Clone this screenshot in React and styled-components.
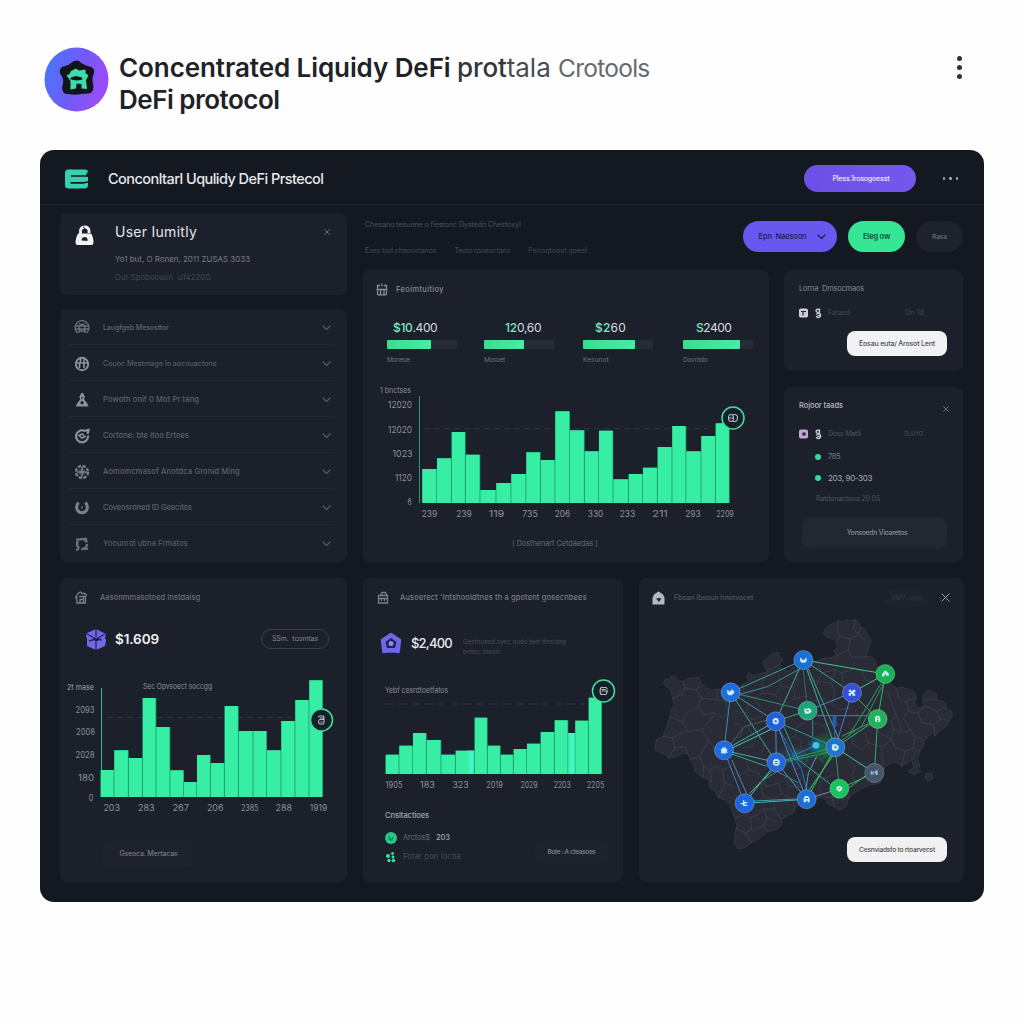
import React from "react";
import styled, { createGlobalStyle } from "styled-components";

const GREEN = "#36efa4";
const CARD = "#1b202b";

const Global = createGlobalStyle`
  * { box-sizing: border-box; }
  body { margin: 0; background: #fefefe; font-family: Inter, "Liberation Sans", sans-serif; }
`;

const Page = styled.div`
  width: 1024px;
  height: 1024px;
  padding: 47px 40px 0;
  overflow: hidden;
`;

const T = styled.span`
  display: block;
  white-space: pre;
  font-size: ${(p) => p.$size || 7.5}px;
  line-height: ${(p) => p.$lh || 10}px;
  font-weight: ${(p) => p.$weight || 400};
  color: ${(p) => p.$color || "#6b717b"};
  letter-spacing: ${(p) => p.$ls || 0}px;
`;

/* ---------- page header ---------- */

const PageHeader = styled.header`
  display: flex;
  height: 103px;
  padding-left: 4px;
`;
const Heading = styled.h1`
  margin: 5px 0 0 10px;
  font-size: 26px;
  line-height: 32px;
  font-weight: 600;
  color: #1f2226;
  flex: 1;
`;
const HeadingLine = styled.div`
  display: flex;
`;
const Kebab = styled.div`
  display: flex;
  flex-direction: column;
  gap: 4px;
  padding: 9px 22px 0 0;
`;
const KebabDot = styled.i`
  width: 5px;
  height: 5px;
  border-radius: 50%;
  background: #303236;
`;

/* ---------- window ---------- */

const Window = styled.main`
  width: 944px;
  height: 752px;
  border-radius: 14px;
  background: #141821;
`;
const TopBar = styled.div`
  display: flex;
  align-items: center;
  height: 55px;
  padding: 3px 26px 0 24px;
  border-bottom: 1px solid #20252f;
`;
const TopTitle = styled.div`
  flex: 1;
  padding-left: 19px;
`;
const Pill = styled.button`
  display: flex;
  align-items: center;
  justify-content: center;
  gap: ${(p) => p.$gap || 0}px;
  width: ${(p) => p.$w}px;
  height: ${(p) => p.$h}px;
  padding: 0 0 0 ${(p) => p.$shift || 0}px;
  border: ${(p) => p.$border || "0"};
  border-radius: ${(p) => p.$r || 16}px;
  background: ${(p) => p.$bg || "transparent"};
  font-family: inherit;
`;
const Dots = styled.div`
  display: flex;
  gap: 4px;
  margin-left: 26.5px;
  i { width: 2.5px; height: 2.5px; border-radius: 50%; background: #a3a7af; }
`;

const Body = styled.div`
  padding: 8px 20px 0;
`;
const Upper = styled.div`
  display: flex;
  gap: 16px;
  height: 349px;
`;
const Lower = styled.div`
  display: grid;
  grid-template-columns: 287px 260px 325px;
  column-gap: 16px;
  height: 304px;
  margin-top: 16px;
`;
const LeftColumn = styled.div`
  width: 287px;
  display: flex;
  flex-direction: column;
  gap: 14px;
`;
const RightArea = styled.div`
  width: 600px;
`;
const Card = styled.section`
  position: relative;
  border-radius: 7px;
  background: ${CARD};
`;

/* ---------- user card ---------- */

const UserCard = styled(Card)`
  display: flex;
  height: 82px;
  padding: 12px 17px 0 15px;
`;
const UserText = styled.div`
  flex: 1;
  padding-left: 21px;
`;
const UserMeta = styled.div`
  display: grid;
  row-gap: 9px;
  padding-top: 15px;
`;

/* ---------- navigation ---------- */

const NavCard = styled(Card)`
  height: 253px;
  padding: 0 12px 0 8px;
`;
const NavRow = styled.div`
  display: flex;
  align-items: center;
  height: 36px;
  padding: 2px 4px 0 6px;
  border-bottom: 1px solid ${(p) => (p.$last ? "transparent" : "#222833")};
`;
const NavLabel = styled.div`
  flex: 1;
  padding-left: 13px;
`;

/* ---------- toolbar ---------- */

const Toolbar = styled.div`
  display: flex;
  justify-content: space-between;
  height: 57px;
  padding-left: 2px;
`;
const Crumbs = styled.div`
  padding-top: 7px;
`;
const CrumbRow = styled.div`
  display: flex;
  gap: 18px;
  margin-top: 16px;
`;
const Actions = styled.div`
  display: flex;
  align-items: flex-start;
  padding-top: 8px;
  gap: 11px;
`;

const Panels = styled.div`
  display: flex;
  gap: 15px;
`;
const StatsCard = styled(Card)`
  width: 406px;
  height: 292px;
  padding-top: 13px;
`;
const CardHeader = styled.div`
  display: flex;
  align-items: center;
  gap: ${(p) => p.$gap || 8}px;
  height: 13px;
  padding-left: ${(p) => p.$left || 13}px;
`;
const Stats = styled.div`
  display: grid;
  grid-template-columns: 97px 99px 100px 71px;
  padding: 25px 0 15px 24px;
`;
const StatValue = styled.div`
  display: flex;
  padding-left: ${(p) => p.$left}px;
`;
const Track = styled.div`
  width: 70px;
  height: 9px;
  margin: 5px 0 6px;
  border-radius: 1px;
  background: #272b35;
`;
const Fill = styled.div`
  width: ${(p) => p.$w}px;
  height: 9px;
  border-radius: 1px;
  background: linear-gradient(90deg, #3bdc8f, #46eda6);
`;
const ChartSvg = styled.svg`
  display: block;
  font-family: Inter, "Liberation Sans", sans-serif;
`;

/* ---------- right column ---------- */

const SideColumn = styled.div`
  display: flex;
  flex-direction: column;
  gap: 16px;
  width: 179px;
`;
const SideCard = styled(Card)`
  height: ${(p) => p.$h}px;
  padding: 13px 16px 0 15px;
`;
const Line = styled.div`
  display: flex;
  align-items: center;
  height: ${(p) => p.$h || 10}px;
  margin-top: ${(p) => p.$mt || 0}px;
  padding-left: ${(p) => p.$left || 0}px;
  gap: ${(p) => p.$gap || 0}px;
`;
const Push = styled.div`
  margin-left: auto;
  margin-right: ${(p) => p.$r || 0}px;
`;
const Bullet = styled.i`
  width: 6px;
  height: 6px;
  border-radius: 50%;
  background: #2fdc9a;
`;

/* ---------- lower cards ---------- */

const Money = styled.div`
  display: flex;
  align-items: center;
  height: 24px;
  margin-top: ${(p) => p.$mt}px;
  padding: 0 18px 0 ${(p) => p.$left}px;
`;
const Note = styled.div`
  display: grid;
  row-gap: 0;
  padding: 7px 0 0 11px;
`;
const Legend = styled.div`
  display: flex;
  justify-content: space-between;
  padding: 0 14px 0 22px;
`;
const LowerCard = styled(Card)`
  padding-top: 13px;
`;
const MapCard = styled(LowerCard)`
  overflow: hidden;
`;
const MapAction = styled.div`
  position: absolute;
  right: 17px;
  bottom: 20px;
`;

/* ---------- icons ---------- */

const BrandMark = () => (
  <svg width="65" height="65" viewBox="0 0 65 65">
    <defs>
      <linearGradient id="brand" x1="0" y1="0.35" x2="1" y2="0.65">
        <stop offset="0" stopColor="#4a74fb" />
        <stop offset="0.5" stopColor="#7259f8" />
        <stop offset="1" stopColor="#a14af6" />
      </linearGradient>
    </defs>
    <circle cx="32.5" cy="32.5" r="32" fill="url(#brand)" />
    <path d="M33 13.500c3 0 4 3 7 4 4 2 9 2 10 5.500 1 3-1.500 5-1.500 9s2 8 0 12c-2 4-8 2-11.500 3-4 1-8 1-12 0-3 0-5.500 0-6.500-4s1.500-7 .5-11-4-5-3-9 5-3.500 8-5 5-4.500 9-4.500z" fill="#10151c" />
    <path d="M27 24l5-2.500 3 2 6.500-1v3.500l3 2.500-2.500 4.500 1 9-5.500-.5v-4.500l-5-.5-.5 5-5.500 1V34l-4-5.500 3-1.500z" fill="#3fdcab" />
    <path d="M25.500 32q2-2.500 6.500-3l6 1.500.500 2-5 1q-4-.5-8-1.500z" fill="#10151c" />
  </svg>
);

const AppMark = () => (
  <svg width="25" height="22" viewBox="0 0 25 22">
    <path d="M3 1.500h3q1-.5 2 0h13q3 0 3 3V17q0 3.500-3.500 3.500H4.500q-3.500 0-3.500-3.500V5q0-3 2-3.500z" fill="#33d3b0" />
    <path d="M7 7.200H25v1.600H7zM6.500 14h13l5.500-1v1.500l-6 1.200H6.500z" fill="#141821" />
    <path d="M22.800 4.500h2.200v4h-3z" fill="#141821" />
  </svg>
);

const LockIcon = () => (
  <svg width="19" height="21" viewBox="0 0 19 21">
    <path d="M5.500 9V5q1-3 4.500-3 3 0 4 3v3" fill="none" stroke="#f2f3f5" strokeWidth="2.800" />
    <path d="M3 8.500h13q2 2.500 2.500 8 0 3.500-2 3.500H2.500q-2 0-2-3.500Q1 12 3 8.500z" fill="#f2f3f5" />
    <path d="M6.500 15.500q0-3.500 3.500-3.500 2 0 2.500 2v2z" fill="#20242d" />
    <path d="M8.500 1.500l1.500 3" stroke="#20242d" strokeWidth="1" />
  </svg>
);

const Cross = ({ size = 6, color = "#737983" }) => (
  <svg width={size} height={size} viewBox="0 0 10 10" stroke={color} strokeWidth={size > 7 ? 1.1 : 1.5} strokeLinecap="round">
    <path d="M1 1l8 8M9 1L1 9" />
  </svg>
);

const Chevron = ({ color = "#525964", width = 9 }) => (
  <svg width={width} height="6" viewBox="0 0 9 6" fill="none" stroke={color} strokeWidth="1.200" strokeLinecap="round" strokeLinejoin="round">
    <path d="M1 1l3.500 3.500L8 1" />
  </svg>
);

const navGlyphs = [
  <g key="a" fill="none" stroke="#6c737d" strokeWidth="1.300">
    <path d="M3.500 13A7 7 0 1 1 12.500 13" /><path d="M1.500 6h13M1.500 9h13M4.500 3.500Q8 5.500 11.500 3.500M5 6v7M11 6v7M5.500 11h5" />
  </g>,
  <g key="b" fill="none" stroke="#8b939c" strokeWidth="1.900">
    <circle cx="8" cy="8" r="6.200" /><path d="M2 7h12M6.500 2.500v4M5.500 7v5M10 2.500V12" strokeWidth="1.600" />
  </g>,
  <g key="c" fill="#8b939c">
    <path fillRule="evenodd" d="M7.200 1h1.800l2 4-1 2.500 3 3.500 1.500 3.500H1.800l1.500-3.500 3-3.500-1-2.500zM8 4.500L6.800 6.500h2.600zM8 8.500l-2 2.500 2 1.500 2-1.500z" />
  </g>,
  <g key="d" fill="none" stroke="#8b939c" strokeWidth="2.200">
    <path d="M14 7.500A6 6 0 1 1 10.500 2.800L14.500 2 13.500 6" /><path d="M5 7.500l3-1.500 3 2.500-3 1.500z" strokeWidth="1.500" />
  </g>,
  <g key="e" fill="none" stroke="#79808a" strokeWidth="2.400">
    <circle cx="8" cy="8" r="6" strokeDasharray="3.200 1.500" /><path d="M8 3v10M3 8h10" strokeWidth="1.700" /><path d="M6 5.500v5M10 5.500v5" strokeWidth="1" />
  </g>,
  <g key="f" fill="none" stroke="#79808a" strokeWidth="3">
    <path d="M4.500 2.500Q1 7 4 11q4 3.500 8 0 3-4-.5-8.500" /><path d="M8 6v3" strokeWidth="1" />
  </g>,
  <g key="g" fill="none" stroke="#6c737d" strokeWidth="2.400">
    <circle cx="8" cy="8" r="5" strokeDasharray="8.400 2.070" /><path d="M2 3.500h4M11 1.500l2 2.500M14 12.500l-3 1M2 14l3-1" strokeWidth="2" />
  </g>,
];
const NavIcon = ({ index }) => (
  <svg width="16" height="16" viewBox="0 0 16 16">{navGlyphs[index]}</svg>
);

const BoxIcon = ({ color = "#79808a", variant = "house" }) => (
  <svg width="12" height="13" viewBox="0 0 12 13" fill="none" stroke={color} strokeWidth="1.300">
    {variant === "grid" && <path d="M4 2.500H1.500v3M8 2.500h2.500v3M1.500 7.500V11q0 .8.800.8h7.400q.8 0 .8-.8V7.500M.5 6.500h11M6 .5v3M4.500 6.500v5M8 6.500v5" />}
    {variant === "house" && <path d="M1.800 12V6.500H.5L3 2.500l2.500-1.500 2 1.500h2l2 1.500-1 1.500V12zM4 5.500h6.500M5 12V8.500h3.500M8.500 6v6" />}
    {variant === "bank" && <path d="M1.500 12V4.500h9V12zM1.500 7.500h9M3.500 4.500L5 1.500h3.500l1.500 3M4.500 7.500V10M7.500 7.500V10" />}
  </svg>
);

const HomeIcon = () => (
  <svg width="13" height="14" viewBox="0 0 13 14">
    <path d="M5.500 1q1-1 2 0l3.500 2.500 1.500 3v6.500q0 .5-.5.500H1q-.5 0-.5-.5V7L2 3.500z" fill="#b5b8bf" />
    <path d="M4 7.500l5.500-.5L7 11z" fill="#1b202b" />
  </svg>
);

const TokenIcon = ({ pink }) => (
  <svg width="9" height="10" viewBox="0 0 9 9">
    <rect width="9" height="9" rx="1.800" fill={pink ? "#c4a6d8" : "#cfd1d6"} />
    <path d={pink ? "M4 3.500h2v2H4z" : "M2 3H7M4 3v4"} stroke="#23232e" strokeWidth="1.200" fill={pink ? "#3c2f4f" : "none"} />
  </svg>
);

const CoinGlyph = () => (
  <svg width="8" height="11" viewBox="0 0 8 11" fill="none" stroke="#c9cdd2" strokeWidth="1.300" strokeLinecap="round">
    <path d="M5.500 2Q3.500.5 2.200 2 1.500 4 4.500 4.500M5.500 1v3M2.500 6l3-1Q7.500 6.500 6 9q-2 1.500-3.500-.5M4 7.500h2" />
  </svg>
);

const CubeIcon = () => (
  <svg width="20" height="21" viewBox="0 0 20 21">
    <path d="M10 0l10 5-1 4 1 2-1 6-9 4-9-4V10L0 7l1-3z" fill="#6f6aea" />
    <path d="M10 0v8M10 11v10M1 5l9 5 9-5M3 12l7-2 6 1" stroke="#25245e" strokeWidth="1.400" fill="none" />
    <path d="M7 9l3 1 4-1-2 3-3-.5z" fill="#1c1b48" />
  </svg>
);

const PentagonIcon = () => (
  <svg width="22" height="22" viewBox="0 0 22 22">
    <path d="M11 2L20 8l-1.500 12-4-.5h-7l-4 .5L2 8z" fill="#6e68e8" stroke="#6e68e8" strokeWidth="2.500" strokeLinejoin="round" />
    <path d="M11 6l5.500 4-1.500 6H7L5.500 10z" fill="#20205c" />
    <circle cx="11" cy="11.500" r="2.500" fill="#8f88f0" />
  </svg>
);

const CheckDot = () => (
  <svg width="12" height="12" viewBox="0 0 12 12">
    <circle cx="6" cy="6" r="6" fill="#26c98a" />
    <path d="M3.500 3.500Q3 8 6 9q3-1.500 2.500-5L6.500 7z" fill="#0f7f5c" />
  </svg>
);
const ClusterDot = () => (
  <svg width="12" height="12" viewBox="0 0 12 12" fill="#2fe3a0">
    <circle cx="7.500" cy="2.500" r="1.500" /><circle cx="3" cy="5" r="2" /><circle cx="8" cy="6" r="1.500" /><circle cx="4" cy="9.500" r="1.700" /><circle cx="8.500" cy="9.500" r="1.700" />
  </svg>
);

/* ---------- charts ---------- */

const mainEdges = [59.3, 74, 88.7, 102.7, 117.3, 133.3, 148.3, 163.3, 177.7, 192.3, 207, 221.7, 236, 250.3, 265.7, 280, 294.7, 309.3, 323.3, 338.3, 352.7, 366.7];
const mainHeights = [34, 44.7, 71, 48.3, 13, 20, 29, 50.7, 43, 91.7, 72.7, 51.7, 72.3, 23.7, 29, 35.3, 56, 77, 51.7, 67, 79.7];
const leftEdges = [40.7, 54.3, 68.7, 82.7, 96.3, 110.3, 124, 137, 150.7, 164.7, 178.7, 193.3, 207, 221.3, 235.3, 249.3, 263];
const leftHeights = [27, 46.7, 39, 99, 70, 26.7, 15, 42, 34, 91, 66, 66, 46.7, 76, 97, 116.7];
const midEdges = [22.7, 36.3, 50, 63.7, 78.3, 92.7, 111.7, 124.7, 137.7, 150.7, 164, 177.7, 191.7, 205.3, 212.3, 225.7, 239];
const midHeights = [19.3, 28.3, 41, 34, 19.3, 23.3, 56.3, 28.3, 19.3, 25, 30.3, 42, 53.7, 41, 53.3, 76.3];

const Bars = ({ edges, heights, base }) => (
  <g>
    {heights.map((h, i) => (
      <g key={i}>
        <rect x={edges[i]} y={base - h} width={edges[i + 1] - edges[i]} height={h} fill="#1d9f70" />
        <rect x={edges[i]} y={base - h} width={edges[i + 1] - edges[i] - 0.8} height={h} fill={GREEN} />
      </g>
    ))}
  </g>
);

const AxisText = ({ x, y, w, size = 8.5, color = "#8b9098", children }) => (
  <text x={x - w / 2} y={y + 3} fontSize={size} fill={color} textLength={w} lengthAdjust="spacingAndGlyphs">{children}</text>
);

const Marker = ({ x, y, children }) => (
  <g>
    <circle cx={x} cy={y} r="11" fill="#15212a" stroke="#48dc9c" strokeWidth="1.500" />
    <g transform={`translate(${x} ${y})`} fill="none" stroke="#b4bcc2" strokeWidth="1.100">{children}</g>
  </g>
);

const MainChart = () => (
  <ChartSvg width="406" height="178" viewBox="0 0 406 178">
    <AxisText x={32.5} y={9.5} w={31} size={7.5}>1 bnctses</AxisText>
    <AxisText x={37} y={25} w={24}>12020</AxisText>
    <AxisText x={37} y={50} w={24}>12020</AxisText>
    <AxisText x={39.5} y={74} w={20}>1023</AxisText>
    <AxisText x={40.5} y={98} w={17}>1120</AxisText>
    <AxisText x={46.5} y={121.5} w={4}>6</AxisText>
    <path d="M61 48.500H345" stroke="#2c333e" strokeWidth="1" strokeDasharray="6 4" />
    <path d="M56.500 16V123" stroke="#2a9b76" strokeWidth="1" />
    <Bars edges={mainEdges} heights={mainHeights} base={123} />
    {["239", "239", "119", "735", "206", "330", "233", "211", "293", "2209"].map((t, i) => (
      <AxisText key={i} x={[66.5, 101, 133.5, 167, 199.5, 232.5, 264.5, 297, 330, 362][i]} y={133.5} w={t.length > 3 ? 17.5 : 15.5}>{t}</AxisText>
    ))}
    <Marker x={370} y={38}><ellipse cx="-2" rx="2.500" ry="3.500" /><path d="M0-3.500h1.500q3 0 3 3.500T1.500 3.500H0M-4 0h5" /></Marker>
    <AxisText x={192} y={162.5} w={86} size={7.5} color="#666c76">( Dosthenart Cetdaedas )</AxisText>
  </ChartSvg>
);

const LeftChart = () => (
  <ChartSvg width="287" height="145" viewBox="0 0 287 145">
    <AxisText x={20.5} y={14} w={27} size={7.5} color="#a2a7ae">2t mase</AxisText>
    <AxisText x={117.5} y={13} w={69} size={7.5}>Sec Opvsoect soccgg</AxisText>
    <AxisText x={25} y={36.5} w={19}>2093</AxisText>
    <AxisText x={25.5} y={59} w={19}>2008</AxisText>
    <AxisText x={25} y={82} w={19}>2028</AxisText>
    <AxisText x={26} y={104.5} w={16}>180</AxisText>
    <AxisText x={31} y={124.5} w={4.5}>0</AxisText>
    <path d="M47 44.500H237" stroke="#2c333e" strokeWidth="1" strokeDasharray="6 4" />
    <path d="M41.500 15V124" stroke="#2fb989" strokeWidth="1" />
    <Bars edges={leftEdges} heights={leftHeights} base={124} />
    {["203", "283", "267", "206", "2385", "288", "1919"].map((t, i) => (
      <AxisText key={i} x={[51.7, 86.3, 120.7, 155.2, 189.7, 223.7, 258.5][i]} y={135} w={t.length > 3 ? 17.5 : 16.5}>{t}</AxisText>
    ))}
    <Marker x={261.5} y={47}><path d="M-3-2.500q0-1.500 1.500-1.500h3q1 0 1 1.500T1.500-.5h-3Q-3-.5-3 1.500T-1.500 4h3q1 0 1-2V-2.500M-1.500-2H2.500M-1 2h2" /></Marker>
  </ChartSvg>
);

const MidChart = () => (
  <ChartSvg width="260" height="119" viewBox="0 0 260 119">
    <defs>
      <linearGradient id="sheen"><stop offset="0" stopColor="#36efa4" /><stop offset="0.6" stopColor="#45f7cf" /><stop offset="1" stopColor="#36efa4" /></linearGradient>
    </defs>
    <AxisText x={53.5} y={17.5} w={63} size={7.5}>Yebf cesrdtoetfatos</AxisText>
    <path d="M22 32H222" stroke="#2c333e" strokeWidth="1" strokeDasharray="9 4" />
    <Bars edges={midEdges} heights={midHeights} base={102} />
    <rect x="104" y="78.700" width="7.200" height="23.300" fill="url(#sheen)" />
    <rect x="205.300" y="61" width="6.500" height="41" fill="url(#sheen)" />
    {["1905", "183", "323", "2019", "2029", "2203", "2205"].map((t, i) => (
      <AxisText key={i} x={[31, 64.5, 97.5, 131.5, 166, 199.2, 232.5][i]} y={113} w={[17, 15, 16, 16.5, 17, 17, 17.5][i]}>{t}</AxisText>
    ))}
    <Marker x={240.5} y={19}><path d="M4-1.500L2.500-3.500h-5Q-4.500 0-2.500 3.500h5L4 0H-2M-2-1.500H2" /></Marker>
  </ChartSvg>
);

/* ---------- network map ---------- */

const nodes = {
  a: [505, 271, "#1d6fd6"], b: [751, 313, "#18b257"], c: [651, 369, "#3350d6"], d: [287, 368, "#1f6ddd"],
  e: [518, 423, "#1fa377"], f: [422, 455, "#2360d8"], g: [728, 448, "#1fb35a"], h: [267, 542, "#1d6be0"],
  i: [424, 578, "#2467d6"], k: [601, 533, "#2173cc"], l: [718, 610, "#44566a"], m: [613, 657, "#17c45c"],
  n: [515, 689, "#1d6dd8"], o: [329, 701, "#1a68e0"],
};
const links = [
  ["a", "d", "#3f9e8f"], ["a", "b", "#3fc58a"], ["a", "c", "#3f9e97"], ["a", "f", "#3fae8d"], ["a", "k", "#3fae97"],
  ["d", "h", "#3b8f97"], ["d", "f", "#3f93a9"], ["d", "e", "#2f8f6d"], ["d", "i", "#3fa38f"], ["f", "h", "#3fb3b0"],
  ["f", "e", "#28b95c"], ["f", "k", "#2f9f80"], ["f", "n", "#4a8ad0"], ["f", "i", "#3f8fc4"], ["h", "i", "#3faea5"],
  ["h", "o", "#4a79c0"], ["i", "o", "#45b8c0"], ["i", "n", "#4a9fc4"], ["o", "n", "#45b3b8"],
  ["e", "c", "#3f86c4"], ["c", "b", "#3fc58a"], ["c", "g", "#2fa86d"], ["c", "k", "#5579b8"],
  ["b", "g", "#34b870"], ["g", "k", "#2fbd66"], ["g", "l", "#2fa870"], ["k", "l", "#43c489"],
  ["k", "m", "#3d8d6e"], ["k", "n", "#2fc070"], ["l", "m", "#3fb070"], ["m", "n", "#6d8f90"], ["i", "k", "#1fae50"],
];
const extraLinks = [
  ["M494 298L400 350 312 375", "#3f8f8f"], ["M520 298L612 508", "#3fa38f"], ["M292 535L410 478", "#45c7bd"], ["M395 590L288 552", "#34a58c"],
  ["M290 570L335 672", "#5c7fc4"], ["M410 605L343 672", "#45c48f"], ["M357 694L487 688", "#3a9bb0"], ["M523 660L592 560", "#2fd070"],
  ["M738 342L678 440L640 500", "#2f9f62"], ["M533 450L533 500", "#3a8aa0"], ["M435 483L500 600 515 660", "#2f6fc0"], ["M596 440L600 505", "#2b6cd0"],
  ["M640 655L690 620", "#3fb070"], ["M470 560L540 528", "#3b78b0"], ["M446 470L490 570 588 645", "#2fa386"],
  ["M505 300L515 395", "#34656c"], ["M426 605L372 640M426 605L490 640", "#4a7f90"], ["M545 438H700", "#2f8f90"],
  ["M700 462L620 500", "#2f9f6a"], ["M513 660L520 610 545 560", "#3fa0c0"], ["M620 512L680 470 745 342", "#2f9058"], ["M455 575L580 548", "#2f9f60"], ["M285 525L330 470 400 450", "#4a5f68"],
];

const coast = "M565 190L572 176 585 165 598 160 610 153 626 156 640 152 662 150 670 160 676 172 690 180 698 196 708 210 706 222 700 235 697 250 690 262 705 258 718 268 728 290 745 315 770 345 785 355 800 352 822 360 838 366 843 385 838 404 852 415 868 410 862 392 866 373 880 361 896 368 906 374 904 390 920 393 934 402 931 414 950 425 952 440 944 452 934 470 920 480 908 488 900 500 892 488 880 502 868 512 864 532 855 545 848 562 835 570 818 578 800 590 785 580 770 578 754 590 745 600 735 640 700 648 680 655 660 668 645 680 638 695 634 710 612 722 600 712 580 705 570 685 552 684 540 690 522 698 510 705 495 704 480 712 478 728 455 740 440 748 440 765 424 780 400 785 380 798 372 808 350 818 330 834 310 838 298 820 302 800 300 790 306 770 300 745 290 720 285 705 270 690 250 685 240 665 225 655 222 630 205 624 180 605 176 585 165 570 160 555 145 550 128 560 100 565 88 552 75 548 58 540 62 524 65 510 84 500 92 480 98 460 105 440 108 420 118 405 112 385 108 360 94 352 85 340 92 328 106 330 108 320 120 322 130 334 145 335 160 326 175 325 192 322 196 338 215 355 232 362 250 358 270 372 290 370 305 355 320 345 340 335 336 318 342 310 352 318 365 315 385 310 400 304 390 296 384 280 392 268 402 260 418 252 432 248 430 262 444 266 436 282 440 296 460 305 478 290 490 280 515 268 540 275 556 270 570 265 588 264 602 255 598 240 608 235 604 215 592 205 575 203z";
const borders = [
  "M610 153L606 180 615 200 645 208 670 195 676 172", "M645 208L640 240 648 262 690 262", "M670 195L695 215M604 215L615 200", "M600 262L640 240", "M662 150L655 175 670 195",
  "M112 385L140 375 150 355 145 335M150 355L185 362 196 338M185 362L200 385 245 390 250 358", "M200 385L190 410 205 435 240 430 262 445 280 430 270 395 245 390", "M105 440L140 455 160 485 200 480 225 455 240 430M190 410L160 425 140 455",
  "M84 500L112 505 140 490 160 485M112 505L120 535 100 565M120 535L150 530 160 555M200 480L220 510 240 540", "M165 570L195 560 220 510M195 560L205 590 225 600 240 590M205 590L205 624M225 600L228 640", "M240 590L262 600 270 640 250 685M262 600L290 590M270 640L300 655",
  "M300 745L330 735 345 745 370 735 385 715 420 720 440 748M345 745L350 780 330 790 350 818M330 790L302 775M350 780L385 770 400 785M385 770L395 745 385 715M395 745L425 755", "M420 720L415 690 440 670 470 690 480 712M440 670L430 640 395 650 375 640 350 655M415 690L385 680 375 640M385 680L370 700",
  "M475 600L500 620 490 650 520 660M500 620L540 610 560 630 550 660 575 680M560 630L600 610M540 610L530 580", "M570 685L590 680 600 712M590 680L625 690 645 680", "M757 365L785 440 803 490M785 440L770 450 775 480 803 490 825 480 840 500 868 512M840 500L835 535 855 545M835 535L810 545 800 590M810 545L780 535 770 510 775 480",
  "M785 355L790 385 815 395 843 385M815 395L820 425 805 445 825 480M820 425L850 430 868 410M850 430L860 460 895 465 900 500M895 465L915 450 944 452M915 450L905 425 931 414M905 425L885 415 868 410M866 390L904 390", "M728 485L770 510M770 510L740 530 745 600M740 530L700 520 680 540M700 520L690 490",
  "M320 345L330 375 360 385 375 410M360 385L385 370 380 340 400 304M385 370L420 375 440 350 430 320M440 350L475 355 490 335 480 310M475 355L480 385 460 400 440 395 420 375M480 385L515 380 540 395 575 385M400 300L425 290 436 282",
  "M520 330L550 335 560 310 600 300 620 310 650 300 660 275M560 310L550 285M620 310L625 340M600 300L590 340 600 370 590 400 610 420 650 415M590 340L550 335 540 360 545 395M680 300L690 330 720 340", "M340 400L335 430 350 450 340 480 365 500M335 430L300 425M350 450L385 440M365 500L350 530 320 535M365 500L390 520 380 550M340 600L370 610 395 650M310 620L340 600 335 570",
  "M450 510L480 500 500 515 495 540 470 550M480 500L485 470 510 460M495 540L520 560 510 590 475 600M520 560L560 570 575 600M560 570L580 550M640 570L660 590 650 620 670 640M660 590L690 580M640 470L660 490 650 520 680 540",
  "M300 460L320 470 318 500 298 510M540 460L570 470 575 500M570 470L590 455 620 470M450 620L460 650 490 650M660 420L670 450 700 470",
];

const glyphPaths = [
  "M-10-6h5v5h10v-5h5v9l-5 5h-10l-5-5z", "M-10 8v-9l4-2 3-7h6l3 5 4 2v9h-7v-5h-5v6z", "M-10-9h8v4h4v-4h8v8h-4v4h4v6h-9v-5h-4v5h-7v-8h5v-4h-5z", "M-11-7l6 2v5l5-5 3-5 4 5 4 0-1 8-7 6h-8l-5-5z",
  "M-11-6h10l2-3 10 6v8l-9 4h-10zM-4-2v4h7v-4z", "M-9-5l5-5h8l5 5v9l-5 5h-8l-5-5zM-3-3v6h6v-6z", "M-8-4l3-6h9l4 6v12H-8zM-3-4h6v3h-6zM-3 3h6v3h-6z", "M-10-4l5 0 0-6 5 2 5-3 0 6 6 1-3 5 3 6-7 1-2 4-5-4-7 2 2-6z",
  "M-10-5l5-5h9l6 5v10l-5 5h-9l-6-5zM-4-4v3h8v-3zM-4 2v3h8V2z", "M-9-9h12l7 6v7l-6 6h-10l-5-6zM-2-4v7h5v-6z", "M-11-6h4v4h2v-4h3v12h-3v-4h-3v4h-3zM2-7l8-1v14H4V2H1z", "M-9-5l8-3 10 4-1 8-8 5-8-5zM-3-2l3 4 4-4z",
  "M-9-3l4-7h9l5 7v12H3V4h-5v5h-7zM-4-4h8v3h-8z", "M-12-1h7v-8h4v5h9v4H0v4h8v4H-5V3h-7z",
];

const NetworkMap = () => (
  <ChartSvg width="325" height="240" viewBox="12 130 975 720">
    <defs>
      <radialGradient id="glowG"><stop offset="0" stopColor="#0f9a3f" stopOpacity="0.75" /><stop offset="1" stopColor="#0f9a3f" stopOpacity="0" /></radialGradient>
      <radialGradient id="glowB"><stop offset="0" stopColor="#1f86d0" stopOpacity="0.8" /><stop offset="1" stopColor="#1f5fa0" stopOpacity="0" /></radialGradient>
    </defs>
    <g fill="#292c36" stroke="#3b404a" strokeWidth="2" strokeLinejoin="round">
      <path d={coast} />
      <path d="M832 578L848 568 855 590 845 598 858 605 838 615 818 604 836 596zM874 612L890 610 894 626 880 634 870 624z" />
    </g>
    <g fill="none" stroke="#414650" strokeWidth="2" strokeLinejoin="round">
      {borders.map((d, i) => <path key={i} d={d} />)}
    </g>
    <ellipse cx="480" cy="560" rx="70" ry="38" fill="url(#glowB)" opacity="0.5" />
    <circle cx="570" cy="535" r="48" fill="url(#glowG)" />
    <g fill="none" strokeWidth="3">
      {links.map(([p, q, color], i) => (
        <line key={i} x1={nodes[p][0]} y1={nodes[p][1]} x2={nodes[q][0]} y2={nodes[q][1]} stroke={color} />
      ))}
      {extraLinks.map(([d, color], i) => <path key={i} d={d} stroke={color} />)}
    </g>
    <rect x="593" y="438" width="12" height="34" rx="4" fill="#2262c4" opacity="0.85" />
    <circle cx="543" cy="528" r="30" fill="url(#glowB)" />
    <circle cx="543" cy="527" r="10" fill="#3cc3ee" />
    {Object.values(nodes).map(([x, y, color], i) => (
      <g key={i}>
        <circle cx={x} cy={y} r="28.500" fill={color} stroke="#ffffff" strokeOpacity="0.25" strokeWidth="3" />
        <path transform={`translate(${x} ${y})`} fillRule="evenodd" fill={i === 10 ? "#9fb4c4" : "#c8ecf8"} d={glyphPaths[i]} />
      </g>
    ))}
  </ChartSvg>
);

/* ---------- content ---------- */

const navItems = [
  ["Laugfgeb Mesosttor", 7.2, -0.19, "#5c636e"],
  ["Couoc Mestmage Io aocouactons", 7.2, -0.05, "#555c67"],
  ["Powoth onit 0 Mot Pr tang", 7.5, 0.13, "#5c636e"],
  ["Cortone: bte Itoo Ertoes", 7.5, 0.02, "#5c636e"],
  ["Aomomcmasof Anotdca Gronid Ming", 7.5, 0.15, "#5c636e"],
  ["Coveosroned ID Geecitos", 7.5, -0.09, "#5c636e"],
  ["Yoounrdi ubna Frmatos", 7.5, 0.09, "#555c67"],
];
const stats = [
  { lead: "$10", rest: ".400", left: 6, ls: -0.36, fill: 44, name: "Moneue", nls: -0.4 },
  { lead: "12", rest: "0,60", left: 21, ls: -0.25, fill: 40, name: "Mosoet", nls: -0.4 },
  { lead: "$2", rest: "60", left: 12, ls: 0.23, fill: 52, name: "Kesunot", nls: 0.1 },
  { lead: "S", rest: "2400", left: 13, ls: -0.5, fill: 57, name: "Dovntdo", nls: -0.2 },
];

export default function App() {
  return (
    <Page>
      <Global />
      <PageHeader>
        <BrandMark />
        <Heading>
          <HeadingLine>
            <T $ls={-0.08} $size={26} $lh={32} $weight={600} $color="#1f2226">Concentrated Liquidy DeFi </T>
            <T $ls={-0.15} $size={26} $lh={32} $weight={500} $color="#33363b">prot</T>
            <T $ls={0} $size={26} $lh={32} $weight={400} $color="#484b50">tala </T>
            <T $ls={-0.75} $size={24.5} $lh={32} $weight={400} $color="#66696e">Crotools</T>
          </HeadingLine>
          <HeadingLine><T $ls={-0.5} $size={26} $lh={32} $weight={600} $color="#1f2226">DeFi protocol</T></HeadingLine>
        </Heading>
        <Kebab><KebabDot /><KebabDot /><KebabDot /></Kebab>
      </PageHeader>

      <Window>
        <TopBar>
          <AppMark />
          <TopTitle><T $ls={-0.54} $size={14.5} $lh={18} $weight={500} $color="#e6e8eb">Conconltarl Uqulidy DeFi Prstecol</T></TopTitle>
          <Pill $w={112} $h={27} $shift={2} $bg="linear-gradient(90deg,#6b50e6,#7558ee)"><T $ls={-0.21} $size={7} $weight={600} $color="#e4defb">Pless.1rosogoesst</T></Pill>
          <Dots><i /><i /><i /></Dots>
        </TopBar>

        <Body>
          <Upper>
            <LeftColumn>
              <UserCard>
                <LockIcon />
                <UserText>
                  <T $ls={0.27} $size={14} $lh={14} $color="#e3e5e8">User Iumitly</T>
                  <UserMeta>
                    <T $ls={-0.03} $size={8} $color="#777d86">Yo1 but, O Ronen, 2011 ZUSAS 3033</T>
                    <T $ls={0.16} $color="#454b56">Our Spoboouon  Uf4220O</T>
                  </UserMeta>
                </UserText>
                <Line $mt={2}><Cross /></Line>
              </UserCard>
              <NavCard>
                {navItems.map(([label, size, ls, color], i) => (
                  <NavRow key={label} $last={i === 6}>
                    <NavIcon index={i} />
                    <NavLabel><T $size={size} $ls={ls} $weight={500} $color={color}>{label}</T></NavLabel>
                    <Chevron />
                  </NavRow>
                ))}
              </NavCard>
            </LeftColumn>

            <RightArea>
              <Toolbar>
                <Crumbs>
                  <T $ls={-0.16} $size={7.2} $weight={500} $color="#414751">Chesano tesuone o fiestonc Dystedn Chestoxyl</T>
                  <CrumbRow>
                    <T $ls={-0.08} $size={7} $weight={500} $color="#3c424c">Exes tod cheosstanos</T>
                    <T $ls={-0.14} $size={7} $weight={500} $color="#3c424c">Testo rpoesctans</T>
                    <T $ls={0.02} $size={7} $weight={500} $color="#3c424c">Pecoqtoost goeel</T>
                  </CrumbRow>
                </Crumbs>
                <Actions>
                  <Pill $w={94} $h={31} $shift={5} $bg="#6858f0" $gap={11}><T $ls={-0.14} $color="#1d1a4a" $weight={500}>Epn  Naesoon</T><Chevron color="#1d1a4a" /></Pill>
                  <Pill $w={57} $h={31} $bg="#35e795"><T $ls={-0.18} $color="#0c4a38" $weight={600}>Eleg ow</T></Pill>
                  <Pill $w={47} $h={31} $bg="#1e222c"><T $size={6.5} $color="#6a707a" $weight={500}>Rasa</T></Pill>
                </Actions>
              </Toolbar>
              <Panels>
                <StatsCard>
                  <CardHeader><BoxIcon variant="grid" color="#8b9098" /><T $ls={0.42} $color="#9aa0a8">Feoimtuitioy</T></CardHeader>
                  <Stats>
                    {stats.map((s) => (
                      <div key={s.name}>
                        <StatValue $left={s.left}>
                          <T $ls={s.ls} $size={12} $lh={14} $weight={500} $color="#7fe6c0">{s.lead}</T>
                          <T $ls={s.ls} $size={12} $lh={14} $color="#d9dde0">{s.rest}</T>
                        </StatValue>
                        <Track><Fill $w={s.fill} /></Track>
                        <T $ls={s.nls} $size={6.5} $color="#6b717b">{s.name}</T>
                      </div>
                    ))}
                  </Stats>
                  <MainChart />
                </StatsCard>
                <SideColumn>
                  <SideCard $h={101}>
                    <Line $mt={1}><T $ls={-0.22} $color="#838992">Lorna  Dmsocmaos</T></Line>
                    <Line $mt={14} $gap={6}>
                      <TokenIcon />
                      <CoinGlyph />
                      <T $ls={-0.02} $size={7} $color="#434954">Fatasd</T>
                      <Push $r={23}><T $ls={0.08} $size={7} $color="#434954">On 1d</T></Push>
                    </Line>
                    <Line $mt={13} $h={25}><Push><Pill $w={100} $h={25} $r={8} $bg="#f1f2f4"><T $ls={-0.18} $size={7} $weight={500} $color="#4b4e55">Eosau euta/ Arosot Lent</T></Pill></Push></Line>
                  </SideCard>
                  <SideCard $h={175}>
                    <Line $mt={1}><T $ls={-0.08} $weight={500} $color="#b7bbc1">Rojoor taads</T><Push $r={-2}><Cross /></Push></Line>
                    <Line $mt={18} $gap={6}>
                      <TokenIcon pink />
                      <CoinGlyph />
                      <T $ls={-0.28} $size={7} $color="#4e545f">Doss Mat6</T>
                      <Push $r={24}><T $ls={-0.38} $size={6} $color="#4a505b">SUVYO</T></Push>
                    </Line>
                    <Line $mt={13} $left={16} $gap={7}><Bullet /><T $ls={-0.45} $color="#757b84">785</T></Line>
                    <Line $mt={11} $left={16} $gap={7}><Bullet /><T $ls={-0.34} $size={8} $color="#a4a9b0">203, 90-303</T></Line>
                    <Line $mt={11} $left={17}><T $ls={-0.18} $size={7} $color="#4e545f">Ratdonactooa 20 0S</T></Line>
                    <Line $mt={13} $h={31} $left={3}><Pill $w={145} $h={31} $r={8} $shift={5} $bg="#222732"><T $ls={-0.36} $size={7} $weight={500} $color="#858b94">Yonsoedn Vioaretos</T></Pill></Line>
                  </SideCard>
                </SideColumn>
              </Panels>
            </RightArea>
          </Upper>

          <Lower>
            <LowerCard>
              <CardHeader $gap={13} $left={15}><BoxIcon /><T $ls={0.03} $weight={500} $color="#6b717b">Aasonmmasotoed Instdaisg</T></CardHeader>
              <Money $left={26} $mt={23}>
                <CubeIcon />
                <Line $left={9}><T $ls={-0.1} $size={13.5} $lh={16} $weight={600} $color="#f0f1f3">$1.609</T></Line>
                <Push><Pill $w={68} $h={20} $r={10} $border="1px solid #3a404b"><T $ls={-0.12} $size={7} $color="#838992">SSm.  tcomtas</T></Pill></Push>
              </Money>
              <Line $h={22} />
              <LeftChart />
              <Line $h={27} $mt={22} $left={41}><Pill $w={95} $h={27} $r={9} $bg="#1d222d"><T $ls={-0.17} $size={7} $weight={500} $color="#747a83">Gseoca. Mertacas</T></Pill></Line>
            </LowerCard>

            <LowerCard>
              <CardHeader $gap={11} $left={14}><BoxIcon variant="bank" /><T $ls={0.12} $color="#777d86" $weight={500}>Ausoerect 'Intshooldtnes th a gpotent gosecnbees</T></CardHeader>
              <Money $left={17} $mt={27}>
                <PentagonIcon />
                <Line $left={9}><T $ls={-0.78} $size={13} $lh={16} $weight={500} $color="#e9ebed">$2,400</T></Line>
                <Note>
                  <T $ls={-0.15} $size={6.5} $color="#474d58">Gestnusod oyec oudo teet ttestdng</T>
                  <T $ls={0.11} $size={6.5} $color="#474d58">betec.stesn</T>
                </Note>
              </Money>
              <Line $h={17} />
              <MidChart />
              <Line $mt={20} $left={22}><T $ls={-0.05} $weight={500} $color="#a3a8af">Cnsltactioes</T></Line>
              <Legend>
                <div>
                  <Line $mt={12} $gap={6}><CheckDot /><T $ls={-0.12} $color="#656b75">Arctos$</T><T $ls={-0.06} $weight={500} $color="#a3a8af">203</T></Line>
                  <Line $mt={9} $gap={6}><ClusterDot /><T $ls={0.19} $color="#4a505b">Fotar pon ioctia</T></Line>
                </div>
                <Line $mt={17} $h={27}><Pill $w={75} $h={25} $bg="#1d222d"><T $ls={-0.36} $size={6.5} $weight={500} $color="#858a92">Bote : A cteasoes</T></Pill></Line>
              </Legend>
            </LowerCard>

            <MapCard>
              <CardHeader $gap={9}>
                <HomeIcon />
                <T $ls={-0.08} $size={7} $weight={500} $color="#4e545f">Fboan Ibsoun hnotvocet</T>
                <Push><Pill $w={46} $h={18} $r={9} $bg="#1c232d"><T $ls={-0.21} $size={7} $color="#303742">9MY. cop</T></Pill></Push>
                <Line $left={3}><Cross size={9} color="#9da2a9" /></Line>
                <Line $left={5} />
              </CardHeader>
              <Line $h={9} />
              <NetworkMap />
              <MapAction><Pill $w={100} $h={25} $r={8} $bg="#f1f1f2"><T $ls={-0.3} $size={6.75} $weight={500} $color="#4b4e55">Cesnviadsfo to rtoarvecst</T></Pill></MapAction>
            </MapCard>
          </Lower>
        </Body>
      </Window>
    </Page>
  );
}
